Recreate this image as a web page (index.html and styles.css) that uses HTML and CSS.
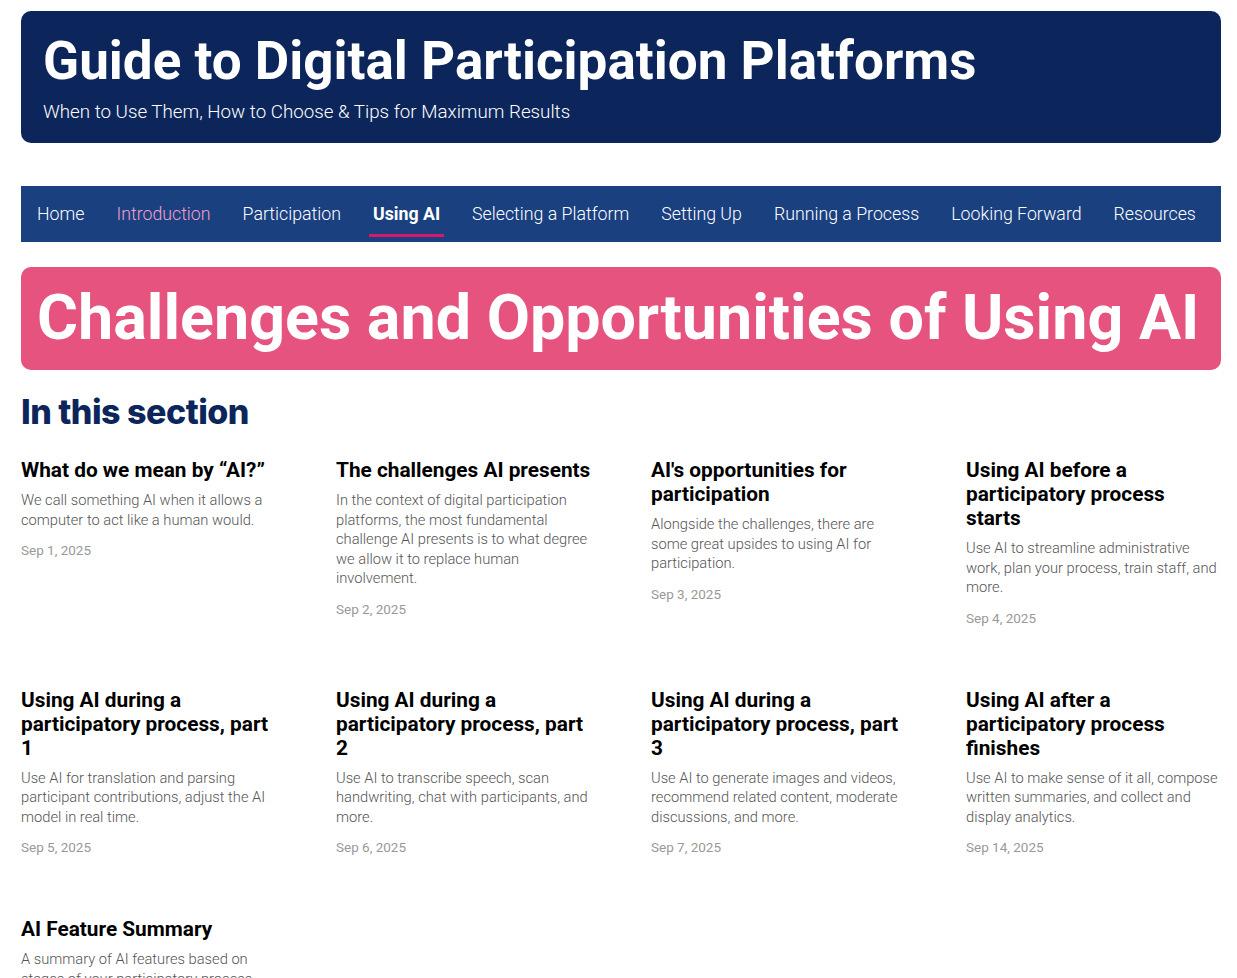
FILE: index.html
```html
<!DOCTYPE html>
<html lang="en">
<head>
    <meta charset="UTF-8">
    <meta name="viewport" content="width=device-width, initial-scale=1.0">
    <title>Challenges and Opportunities of Using AI</title>
    <link rel="stylesheet" href="styles.css">
</head>
<body>
    <div class="page">
        <!-- Site header -->
        <header class="site-header">
            <h1 class="site-title">Guide to Digital Participation Platforms</h1>
            <p class="site-tagline">When to Use Them, How to Choose &amp; Tips for Maximum Results</p>
        </header>

        <!-- Main navigation -->
        <nav class="main-nav">
            <a href="#" class="nav-link">Home</a>
            <a href="#" class="nav-link visited">Introduction</a>
            <a href="#" class="nav-link">Participation</a>
            <a href="#" class="nav-link active">Using AI</a>
            <a href="#" class="nav-link">Selecting a Platform</a>
            <a href="#" class="nav-link">Setting Up</a>
            <a href="#" class="nav-link">Running a Process</a>
            <a href="#" class="nav-link">Looking Forward</a>
            <a href="#" class="nav-link">Resources</a>
        </nav>

        <!-- Section banner -->
        <div class="section-banner">
            <h2>Challenges and Opportunities of Using AI</h2>
        </div>

        <h3 class="section-heading">In this section</h3>

        <div class="post-grid">
            <article class="post">
                <h4 class="post-title">What do we mean by “AI?”</h4>
                <p class="post-excerpt">We call something AI when it allows a computer to act like a human would.</p>
                <div class="post-date">Sep 1, 2025</div>
            </article>
            <article class="post">
                <h4 class="post-title">The challenges AI presents</h4>
                <p class="post-excerpt">In the context of digital participation platforms, the most fundamental challenge AI presents is to what degree we allow it to replace human involvement.</p>
                <div class="post-date">Sep 2, 2025</div>
            </article>
            <article class="post">
                <h4 class="post-title">AI's opportunities for participation</h4>
                <p class="post-excerpt">Alongside the challenges, there are some great upsides to using AI for participation.</p>
                <div class="post-date">Sep 3, 2025</div>
            </article>
            <article class="post">
                <h4 class="post-title">Using AI before a participatory process starts</h4>
                <p class="post-excerpt">Use AI to streamline administrative work, plan your process, train staff, and more.</p>
                <div class="post-date">Sep 4, 2025</div>
            </article>
            <article class="post">
                <h4 class="post-title">Using AI during a participatory process, part 1</h4>
                <p class="post-excerpt">Use AI for translation and parsing participant contributions, adjust the AI model in real time.</p>
                <div class="post-date">Sep 5, 2025</div>
            </article>
            <article class="post">
                <h4 class="post-title">Using AI during a participatory process, part 2</h4>
                <p class="post-excerpt">Use AI to transcribe speech, scan handwriting, chat with participants, and more.</p>
                <div class="post-date">Sep 6, 2025</div>
            </article>
            <article class="post">
                <h4 class="post-title">Using AI during a participatory process, part 3</h4>
                <p class="post-excerpt">Use AI to generate images and videos, recommend related content, moderate discussions, and more.</p>
                <div class="post-date">Sep 7, 2025</div>
            </article>
            <article class="post">
                <h4 class="post-title">Using AI after a participatory process finishes</h4>
                <p class="post-excerpt">Use AI to make sense of it all, compose written summaries, and collect and display analytics.</p>
                <div class="post-date">Sep 14, 2025</div>
            </article>
            <article class="post">
                <h4 class="post-title">AI Feature Summary</h4>
                <p class="post-excerpt">A summary of AI features based on stages of your participatory process.</p>
                <div class="post-date">Sep 15, 2025</div>
            </article>
        </div>
    </div>
</body>
</html>
```

FILE: styles.css
```css
/* Reset */
* {
    margin: 0;
    padding: 0;
    box-sizing: border-box;
}

/* Variables */
:root {
    --navy: #0c265c;
    --nav-blue: #1a4080;
    --pink: #e5537e;
    --accent: #d8176d;
    --text: #000;
    --muted: #555;
    --date: #999;
}

/* Global */
body {
    font-family: Roboto, "Liberation Sans", sans-serif;
    background-color: #fff;
    color: var(--text);
}

.page {
    width: 1200px;
    margin-left: 21px;
    padding: 11px 0 60px;
}

/* Header */
.site-header {
    background-color: var(--navy);
    color: #fff;
    border-radius: 10px;
    padding: 20px 22px 20px;
    height: 132px;
}

.site-title {
    font-size: 53px;
    font-weight: 700;
    line-height: 60px;
}

.site-tagline {
    font-size: 18.75px;
    font-weight: 300;
    line-height: 22px;
    margin-top: 10px;
}

/* Navigation */
.main-nav {
    margin-top: 43px;
    background-color: var(--nav-blue);
    height: 56px;
    display: flex;
    align-items: stretch;
}

.nav-link {
    color: #fff;
    text-decoration: none;
    font-size: 17.75px;
    font-weight: 300;
    line-height: 56px;
    padding: 0 16px;
    position: relative;
}

.nav-link.visited {
    color: #f2a0c8;
}

.nav-link.active {
    font-weight: 700;
}

.nav-link.active::after {
    content: '';
    position: absolute;
    left: 12px;
    right: 12px;
    bottom: 5px;
    height: 3px;
    background-color: var(--accent);
}

/* Banner */
.section-banner {
    margin-top: 25px;
    background-color: var(--pink);
    border-radius: 10px;
    height: 103px;
    padding: 0 16px;
    display: flex;
    align-items: center;
}

.section-banner h2 {
    color: #fff;
    font-size: 62.8px;
    font-weight: 700;
    line-height: 1;
    white-space: nowrap;
}

/* Section list */
.section-heading {
    font-family: Inter, "Noto Sans", sans-serif;
    font-size: 34px;
    font-weight: 800;
    color: var(--navy);
    letter-spacing: -0.5px;
    line-height: 40px;
    margin-top: 22px;
}

.post-grid {
    display: grid;
    grid-template-columns: repeat(4, 1fr);
    column-gap: 60px;
    row-gap: 62px;
    margin-top: 26px;
}

.post-title {
    font-size: 20.8px;
    font-weight: 700;
    line-height: 24px;
}

.post-excerpt {
    font-size: 14.7px;
    font-weight: 300;
    color: var(--muted);
    line-height: 19.5px;
    margin-top: 9px;
}

.post-date {
    font-size: 13.5px;
    color: var(--date);
    margin-top: 12px;
}
```
